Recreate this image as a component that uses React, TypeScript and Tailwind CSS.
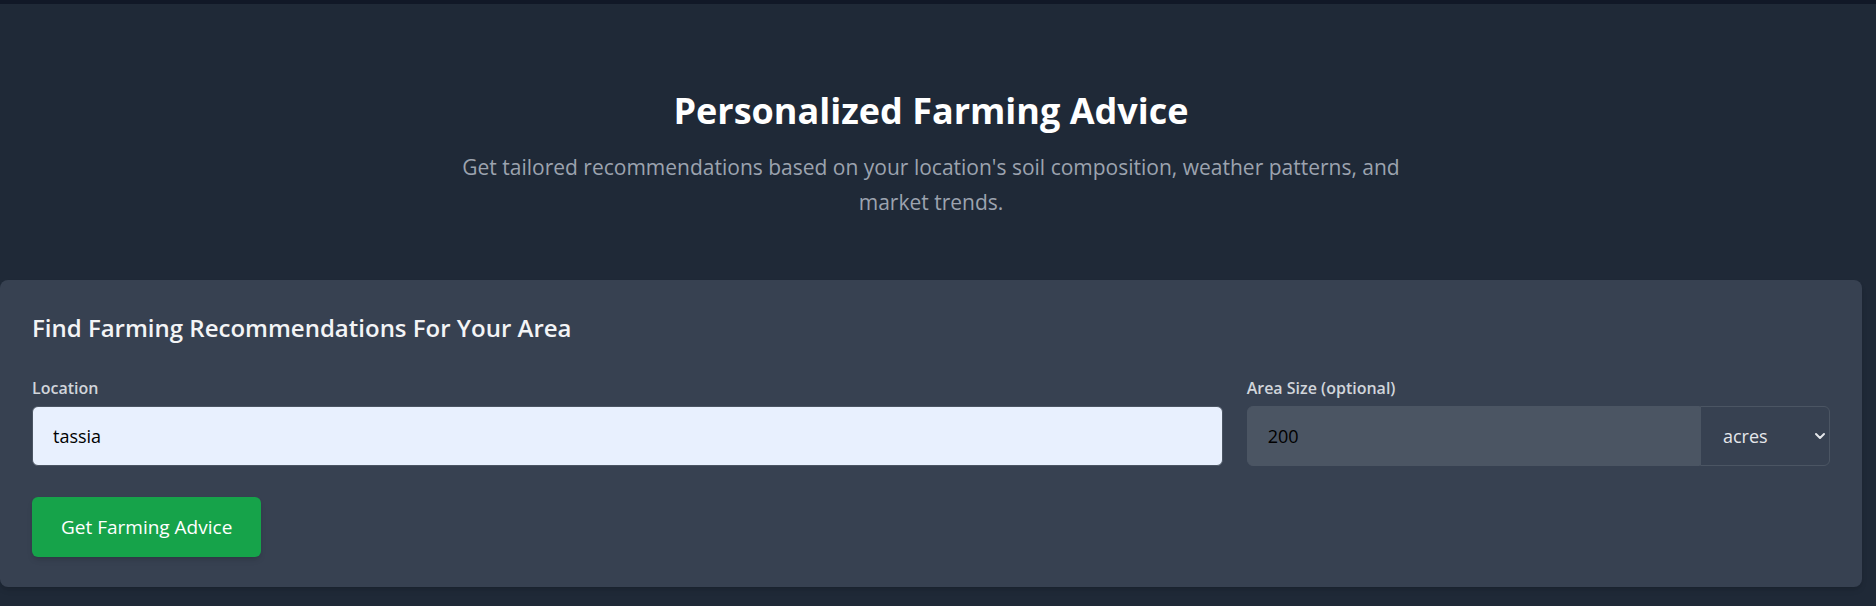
import { ChevronDown } from "lucide-react"

export default function App() {
  return (
    <div
      className="min-h-screen bg-[#1f2937] border-t-4 border-[#111827]"
      style={{ fontFamily: "'Open Sans', 'Noto Sans', sans-serif" }}
    >
      <div className="w-[1862px]">
        {/* Hero */}
        <section className="pt-[87px] pb-[60px] text-center">
          <h1 className="text-4xl font-bold text-white mb-[19px]">Personalized Farming Advice</h1>
          <p className="text-[21px] leading-[35px] text-[#9ca3af] max-w-[960px] mx-auto">
            Get tailored recommendations based on your location's soil composition, weather patterns, and market trends.
          </p>
        </section>

        {/* Search card */}
        <div className="bg-[#374151] rounded-lg px-8 pt-8 pb-[30px] shadow-md">
          <h2 className="text-2xl font-semibold text-[#f3f4f6] mb-[32px]">
            Find Farming Recommendations For Your Area
          </h2>

          <div className="grid grid-cols-3 gap-6">
            <div className="col-span-2">
              <label className="block text-base font-semibold text-[#d1d5db] mb-1.5">Location</label>
              <input
                type="text"
                defaultValue="tassia"
                className="w-full h-[60px] px-5 text-lg text-black bg-[#e8f0fe] border border-[#4b5563] rounded-md focus:outline-none"
              />
            </div>
            <div>
              <label className="block text-base font-semibold text-[#d1d5db] mb-1.5">Area Size (optional)</label>
              <div className="flex">
                <input
                  type="text"
                  defaultValue="200"
                  className="flex-1 min-w-0 h-[60px] px-5 text-lg text-black bg-[#4b5563] border border-[#4b5563] rounded-l-md focus:outline-none"
                />
                <div className="relative w-[130px]">
                  <select
                    defaultValue="acres"
                    className="appearance-none w-full h-[60px] pl-[22px] pr-8 text-lg text-[#e5e7eb] bg-[#374151] border border-[#4b5563] rounded-r-md focus:outline-none"
                  >
                    <option value="acres">acres</option>
                    <option value="hectares">hectares</option>
                  </select>
                  <ChevronDown
                    className="absolute right-[2px] top-1/2 -translate-y-1/2 w-4 h-4 text-[#e5e7eb] pointer-events-none"
                    strokeWidth={3}
                  />
                </div>
              </div>
            </div>
          </div>

          <button className="mt-[31px] h-[60px] px-[29px] text-[19px] font-medium text-white bg-[#16a34a] rounded-md shadow-md">
            Get Farming Advice
          </button>
        </div>
      </div>
    </div>
  )
}
